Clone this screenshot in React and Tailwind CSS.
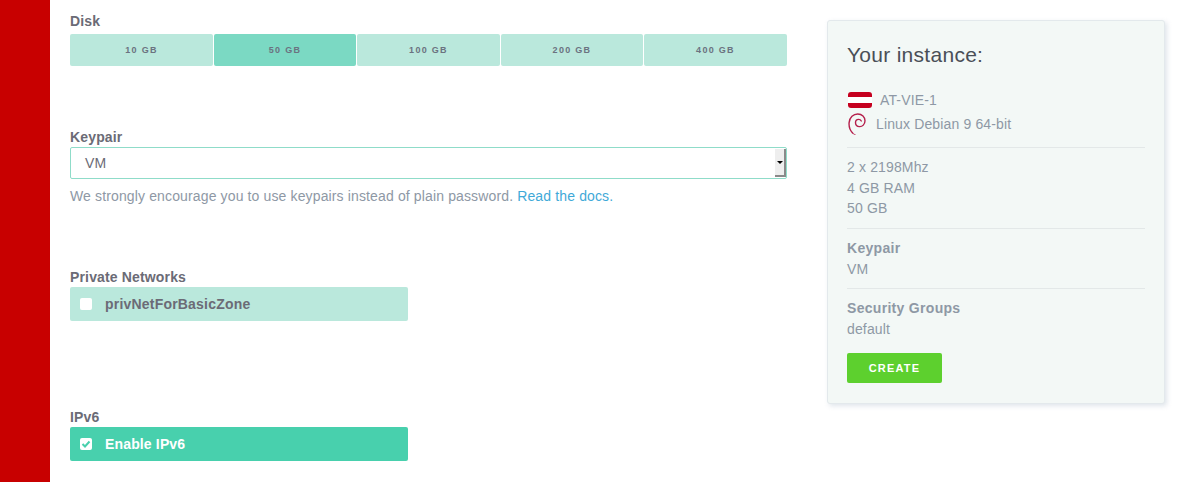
import React from 'react';

const disks = ['10 GB', '50 GB', '100 GB', '200 GB', '400 GB'];

const Label = ({ children }) => (
  <div className="text-[14px] leading-[16px] font-bold tracking-[0.15px] text-[#6b6b76]">{children}</div>
);

const DebianLogo = () => (
  <svg width="18" height="22" viewBox="0 0 18 22" fill="none" stroke="#b5204c" strokeLinecap="round">
    <path d="M4.600 20C1.600 17 .8 13.200 1.100 9.600 1.600 4.400 5.400 1 9.700 1c4.400 0 7.300 3 7.300 6.800 0 3.600-2.700 6-5.500 5.800-2.500-.2-4-1.900-4-3.900 0-1.900 1.400-3.300 3.100-3.300 1.300 0 2.200.7 2.700 1.600" strokeWidth="1.400" />
    <path d="M4.600 20c.9 1 1.700 1.400 2.600 1.700" strokeWidth="0.9" />
  </svg>
);

const Divider = ({ top = 'mt-[9px]' }) => <div className={`${top} mb-[9px] h-px bg-[#e3e8e8]`} />;

export default function App() {
  return (
    <div className="flex h-[482px] w-[1185px] overflow-hidden bg-white font-['Liberation_Sans',Arial,sans-serif]">
      <div className="w-[50px] shrink-0 bg-[#c80000]" />

      <div className="ml-[20px] w-[717px] shrink-0 pt-[13px]">
        <Label>Disk</Label>
        <div className="mt-[5px] grid grid-cols-[143px_142px_143px_142px_143px] gap-[1px]">
          {disks.map((disk) => (
            <div
              key={disk}
              className={`flex h-[32px] items-center justify-center rounded-[2px] pt-[1px] text-[9px] font-bold tracking-[1.3px] text-[#6b7280] ${disk === '50 GB' ? 'bg-[#7bd9c3]' : 'bg-[#bae8dc]'}`}
            >
              {disk}
            </div>
          ))}
        </div>

        <div className="mt-[63px]">
          <Label>Keypair</Label>
        </div>
        <div className="mt-[2px] flex h-[32px] items-stretch rounded-[2px] border border-[#8fdcc9] bg-white">
          <span className="flex-1 self-center pl-[14px] text-[14px] tracking-[0.14px] text-[#6b6b76]">VM</span>
          <span className="my-[1px] flex w-[11px] items-center justify-center border-r-2 border-b-2 border-[#8a8a8a] bg-[#eeeeee]">
            <span className="h-0 w-0 border-x-[3px] border-t-[3px] border-x-transparent border-t-black" />
          </span>
        </div>
        <p className="mt-[9px] text-[14px] leading-[16px] tracking-[0.135px] text-[#8e98a5]">
          We strongly encourage you to use keypairs instead of plain password.{' '}
          <a className="text-[#3fa9d8]">Read the docs.</a>
        </p>

        <div className="mt-[65px]">
          <Label>Private Networks</Label>
        </div>
        <div className="mt-[2px] flex h-[34px] w-[338px] items-center rounded-[2px] bg-[#bae8dc] pl-[10px]">
          <span className="h-[12px] w-[12px] rounded-[2px] bg-white" />
          <span className="ml-[13px] text-[14px] font-bold tracking-[0.2px] text-[#6b6b76]">privNetForBasicZone</span>
        </div>

        <div className="mt-[88px]">
          <Label>IPv6</Label>
        </div>
        <div className="mt-[2px] flex h-[34px] w-[338px] items-center rounded-[2px] bg-[#48d0ad] pl-[10px]">
          <span className="flex h-[12px] w-[12px] items-center justify-center rounded-[2px] bg-white">
            <svg width="10" height="10" viewBox="0 0 10 10" fill="none" stroke="#48d0ad" strokeWidth="2">
              <path d="M1.500 5l2.500 2.500L8.500 2.500" />
            </svg>
          </span>
          <span className="ml-[13px] text-[14px] font-bold tracking-[0.15px] text-white">Enable IPv6</span>
        </div>
      </div>

      <div className="ml-[40px] mt-[20px] h-[384px] w-[338px] shrink-0 rounded-[3px] border border-[#e3e9ec] bg-[#f3f8f6] px-[19px] pt-[21px] shadow-[2px_2px_5px_rgba(150,170,190,0.3)]">
        <div className="text-[21px] leading-[26px] tracking-[0.28px] text-[#4a4f57]">Your instance:</div>

        <div className="mt-[20px] flex h-[24px] items-center text-[14px] tracking-[0.14px] text-[#8e98a5]">
          <span className="ml-[1px] flex h-[16px] w-[24px] flex-col overflow-hidden rounded-[3px]">
            <span className="flex-1 bg-[#c5001f]" />
            <span className="flex-1 bg-white" />
            <span className="flex-1 bg-[#c5001f]" />
          </span>
          <span className="ml-[8px]">AT-VIE-1</span>
        </div>
        <div className="flex h-[24px] items-center text-[14px] tracking-[0.14px] text-[#8e98a5]">
          <span className="ml-[1px] flex"><DebianLogo /></span>
          <span className="ml-[10px]">Linux Debian 9 64-bit</span>
        </div>

        <Divider top="mt-[11px]" />
        <div className="text-[14px] leading-[20.5px] tracking-[0.14px] text-[#8e98a5]">
          <div>2 x 2198Mhz</div>
          <div>4 GB RAM</div>
          <div>50 GB</div>
        </div>

        <Divider />
        <div className="text-[14px] leading-[21px] tracking-[0.14px] text-[#8e98a5]">
          <div className="font-bold tracking-[0.3px]">Keypair</div>
          <div>VM</div>
        </div>

        <Divider top="mt-[8px]" />
        <div className="text-[14px] leading-[21px] tracking-[0.14px] text-[#8e98a5]">
          <div className="font-bold tracking-[0.3px]">Security Groups</div>
          <div>default</div>
        </div>

        <button
          type="button"
          className="mt-[13px] block h-[30px] w-[95px] rounded-[2px] bg-[#5dd02e] pt-[1px] text-[11px] font-bold tracking-[1.2px] text-white"
        >
          CREATE
        </button>
      </div>
    </div>
  );
}
